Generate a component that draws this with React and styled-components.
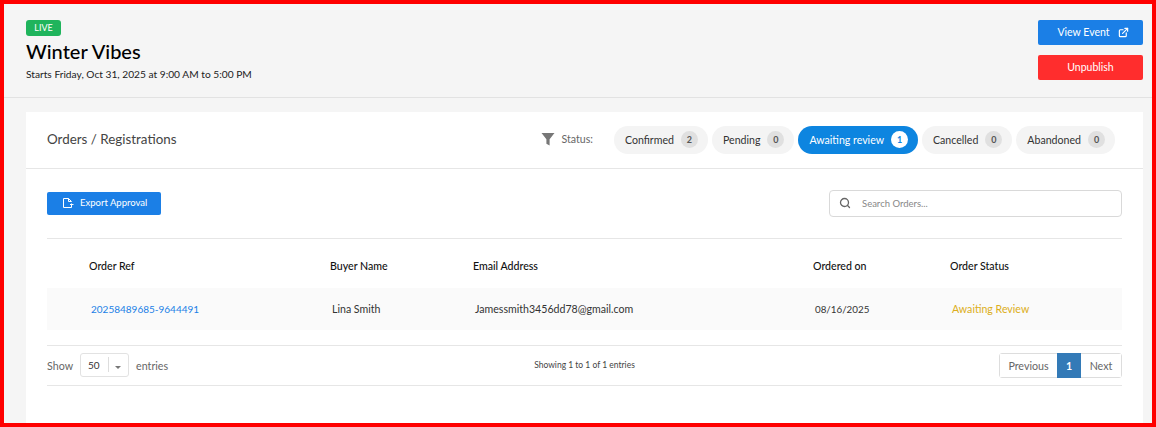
import React from "react";
import styled, { createGlobalStyle } from "styled-components";
import { ExternalLink, Search } from "lucide-react";

const Global = createGlobalStyle`
  html, body {
    margin: 0;
    padding: 0;
    background: #f5f5f5;
  }
  * {
    box-sizing: border-box;
  }
`;

const Frame = styled.div`
  width: 1156px;
  height: 427px;
  border: 4px solid #ff0000;
  background: #f5f5f5;
  overflow: hidden;
  font-family: Lato, "Liberation Sans", sans-serif;
  color: #111;
`;

const Header = styled.header`
  height: 94px;
  padding: 16px 9px 0 22px;
  display: flex;
  justify-content: space-between;
  border-bottom: 1px solid #e2e2e2;
`;

const EventInfo = styled.div`
  display: flex;
  flex-direction: column;
  align-items: flex-start;
`;

const LiveBadge = styled.span`
  width: 35px;
  height: 16px;
  border-radius: 3px;
  background: #1fb45c;
  color: #fff;
  font-size: 9px;
  line-height: 16px;
  text-align: center;
`;

const EventTitle = styled.h1`
  margin: 3px 0 0;
  font-size: 20px;
  line-height: 24px;
  font-weight: 500;
  color: #000;
`;

const EventDate = styled.p`
  margin: 4px 0 0;
  font-size: 10.2px;
  line-height: 14px;
  color: #222;
`;

const EventActions = styled.div`
  display: flex;
  flex-direction: column;
  gap: 10px;
`;

const ActionButton = styled.button`
  width: 105px;
  height: 25px;
  border: 0;
  border-radius: 2px;
  background: ${(props) => props.$bg};
  color: #fff;
  font-family: inherit;
  font-size: 10.5px;
  display: flex;
  align-items: center;
  justify-content: center;
  gap: 8px;
  padding: 0 0 1px ${(props) => props.$shift || "0"};
`;

const Card = styled.section`
  margin: 14px 9px 0 22px;
  height: 320px;
  background: #fff;
`;

const CardHead = styled.div`
  height: 57px;
  padding: 13px 28px 0 21px;
  display: flex;
  align-items: flex-start;
  border-bottom: 1px solid #e6e6e6;
`;

const CardTitle = styled.h2`
  margin: 0;
  flex: 1;
  font-size: 13.4px;
  line-height: 28px;
  font-weight: 400;
  color: #444;
`;

const StatusLabel = styled.span`
  display: flex;
  align-items: center;
  gap: 7px;
  height: 28px;
  margin-right: 21px;
  font-size: 10.6px;
  color: #666;
`;

const Pills = styled.div`
  display: flex;
  gap: 4px;
  margin-top: 1px;
`;

const Pill = styled.span`
  height: 28px;
  padding: 0 10px 1px 11px;
  border-radius: 14px;
  display: flex;
  align-items: center;
  gap: 7px;
  font-size: 10.6px;
  background: ${(props) => (props.$active ? "#0d85e0" : "#f4f4f4")};
  color: ${(props) => (props.$active ? "#fff" : "#333")};
`;

const PillCount = styled.span`
  width: 17px;
  height: 17px;
  border-radius: 50%;
  display: flex;
  align-items: center;
  justify-content: center;
  font-size: 9px;
  font-weight: 700;
  background: ${(props) => (props.$active ? "#fff" : "#e0e0e0")};
  color: ${(props) => (props.$active ? "#0d85e0" : "#555")};
`;

const CardBody = styled.div`
  padding: 0 21px;
`;

const Toolbar = styled.div`
  height: 70px;
  padding-top: 21px;
  display: flex;
  justify-content: space-between;
  align-items: flex-start;
  border-bottom: 1px solid #e6e6e6;
`;

const ExportButton = styled.button`
  width: 114px;
  height: 23px;
  margin-top: 2px;
  border: 0;
  border-radius: 2px;
  background: #1b7fe6;
  color: #fff;
  font-family: inherit;
  font-size: 9.5px;
  display: flex;
  align-items: center;
  gap: 6px;
  padding: 0 0 2px 15px;
`;

const SearchBox = styled.div`
  width: 293px;
  height: 27px;
  border: 1px solid #d9d9d9;
  border-radius: 4px;
  display: flex;
  align-items: center;
  gap: 11px;
  padding: 0 0 1px 9px;
  font-size: 9.5px;
  color: #888;
`;

const Row = styled.div`
  display: grid;
  grid-template-columns: 241px 143px 340px 137px 1fr;
  align-items: center;
  padding: ${(props) => props.$pad};
  height: ${(props) => props.$height};
  background: ${(props) => props.$bg || "transparent"};
  font-size: 10.6px;
  color: #222;
`;

const HeadCell = styled.span`
  font-weight: 500;
  color: #111;
`;

const Cell = styled.span`
  color: ${(props) => props.$color || "#333"};
  font-size: ${(props) => props.$size || "inherit"};
`;

const Footer = styled.div`
  height: 41px;
  margin-top: 15px;
  padding-bottom: 1px;
  border-top: 1px solid #e6e6e6;
  border-bottom: 1px solid #e6e6e6;
  display: grid;
  grid-template-columns: 1fr 1fr 1fr;
  align-items: center;
  font-size: 10.7px;
  color: #666;
`;

const Entries = styled.div`
  display: flex;
  align-items: center;
  gap: 7px;
`;

const PageSize = styled.div`
  width: 49px;
  height: 24px;
  border: 1px solid #e2e2e2;
  border-radius: 3px;
  display: flex;
  align-items: center;
  padding: 0 0 1px 7px;
  font-size: 10px;
  color: #333;
`;

const PageDivider = styled.span`
  width: 1px;
  height: 15px;
  margin-left: 8px;
  background: #ddd;
`;

const Caret = styled.span`
  margin-left: 6px;
  margin-top: 5px;
  border-left: 3.5px solid transparent;
  border-right: 3.5px solid transparent;
  border-top: 3.5px solid #777;
`;

const Showing = styled.span`
  text-align: center;
  font-size: 8.5px;
  color: #444;
`;

const Pagination = styled.div`
  justify-self: end;
  height: 25px;
  display: flex;
  border: 1px solid #ddd;
  border-radius: 3px;
`;

const PageLink = styled.span`
  display: flex;
  align-items: center;
  justify-content: center;
  width: ${(props) => props.$width};
  margin: ${(props) => (props.$active ? "-1px 0" : "0")};
  background: ${(props) => (props.$active ? "#337ab7" : "#fff")};
  color: ${(props) => (props.$active ? "#fff" : "#666")};
  font-weight: ${(props) => (props.$active ? 700 : 400)};
`;

const FilterIcon = () => (
  <svg width="14" height="14" viewBox="0 0 14 14">
    <path d="M0.5 1h13L8.6 7.2V13.5L5.4 11.8V7.2z" fill="#777" />
  </svg>
);

const ExportIcon = () => (
  <svg width="12" height="12" viewBox="0 0 12 12" fill="none" stroke="#fff" strokeWidth="1">
    <path d="M9.5 6.5V10.5H1.5V1.5H6.5L9.5 4.5" />
    <path d="M6.5 1.5V4.5H9.5" />
    <path d="M8 7.5H11.5" />
  </svg>
);

const statuses = [
  { label: "Confirmed", count: 2 },
  { label: "Pending", count: 0 },
  { label: "Awaiting review", count: 1, active: true },
  { label: "Cancelled", count: 0 },
  { label: "Abandoned", count: 0 },
];

const App = () => {
  return (
    <Frame>
      <Global />
      <Header>
        <EventInfo>
          <LiveBadge>LIVE</LiveBadge>
          <EventTitle>Winter Vibes</EventTitle>
          <EventDate>Starts Friday, Oct 31, 2025 at 9:00 AM to 5:00 PM</EventDate>
        </EventInfo>
        <EventActions>
          <ActionButton $bg="#1b7fe6" $shift="5px">
            View Event <ExternalLink size={11} strokeWidth={2.6} />
          </ActionButton>
          <ActionButton $bg="#ff2d2d">Unpublish</ActionButton>
        </EventActions>
      </Header>
      <Card>
        <CardHead>
          <CardTitle>Orders / Registrations</CardTitle>
          <StatusLabel>
            <FilterIcon /> Status:
          </StatusLabel>
          <Pills>
            {statuses.map((s) => (
              <Pill key={s.label} $active={s.active}>
                {s.label}
                <PillCount $active={s.active}>{s.count}</PillCount>
              </Pill>
            ))}
          </Pills>
        </CardHead>
        <CardBody>
          <Toolbar>
            <ExportButton>
              <ExportIcon /> Export Approval
            </ExportButton>
            <SearchBox>
              <Search size={12} color="#666" strokeWidth={2.6} />
              Search Orders...
            </SearchBox>
          </Toolbar>
          <Row $pad="5px 0 0 42px" $height="49px">
            <HeadCell>Order Ref</HeadCell>
            <HeadCell>Buyer Name</HeadCell>
            <HeadCell>Email Address</HeadCell>
            <HeadCell>Ordered on</HeadCell>
            <HeadCell>Order Status</HeadCell>
          </Row>
          <Row $pad="0 0 0 44px" $height="42px" $bg="#fafafa">
            <Cell $color="#1b7fe6" $size="10px">20258489685-9644491</Cell>
            <Cell>Lina Smith</Cell>
            <Cell>Jamessmith3456dd78@gmail.com</Cell>
            <Cell $size="9.8px">08/16/2025</Cell>
            <Cell $color="#dcae20">Awaiting Review</Cell>
          </Row>
          <Footer>
            <Entries>
              Show
              <PageSize>
                50
                <PageDivider />
                <Caret />
              </PageSize>
              entries
            </Entries>
            <Showing>Showing 1 to 1 of 1 entries</Showing>
            <Pagination>
              <PageLink $width="57px">Previous</PageLink>
              <PageLink $width="24px" $active>1</PageLink>
              <PageLink $width="40px">Next</PageLink>
            </Pagination>
          </Footer>
        </CardBody>
      </Card>
    </Frame>
  );
};

export default App;
